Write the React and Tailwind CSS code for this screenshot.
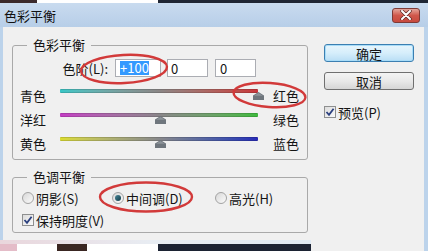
import React from "react";

function Check() {
  return (
    <div className="w-[12px] h-[12px] shrink-0 border border-[#8e8f8f] bg-gradient-to-br from-[#dcdcdc] to-[#fafafa] flex items-center justify-center">
      <svg width="10" height="10" viewBox="0 0 10 10">
        <path d="M1.5 5 L4 7.8 L8.6 1.8" fill="none" stroke="#2a3f7e" strokeWidth="1.8" />
      </svg>
    </div>
  );
}

function Radio({ on }) {
  return (
    <div className="w-[12px] h-[12px] shrink-0 rounded-full border border-[#a3a3a3] bg-gradient-to-br from-[#d8d8d8] to-[#fbfbfb] flex items-center justify-center">
      {on ? <div className="w-[6px] h-[6px] rounded-full bg-gradient-to-br from-[#4a8a9a] to-[#0f3a48]" /> : null}
    </div>
  );
}

function Thumb() {
  return (
    <svg width="11" height="8" viewBox="0 0 11 8">
      <path d="M5.5 0 L11 3.5 L11 8 L0 8 L0 3.5 Z" fill="#6f767d" />
      <path d="M5.5 1 L10 3.8 L1 3.8 Z" fill="#8d949a" />
    </svg>
  );
}

function SliderRow({ left, right, grad, thumbLeft }) {
  return (
    <div className="flex items-center h-[24px] pl-[7px]">
      <span className="w-[40px] leading-none">{left}</span>
      <div className="relative w-[198px] h-[14px]">
        <div className={"mt-[1px] h-[4px] rounded-[1px] border-y border-[#00000022] " + grad} />
        <div className={"absolute top-[4px] flex " + thumbLeft}>
          <Thumb />
        </div>
      </div>
      <span className="ml-[15px] leading-none">{right}</span>
    </div>
  );
}

export default function App() {
  return (
    <div className="relative w-[428px] h-[251px] overflow-hidden bg-[#bcd3eb] font-['Noto_Sans_CJK_SC',sans-serif] text-[13px] text-[#141414] flex flex-col">
      <div className="flex h-[3px] shrink-0">
        <div className="w-[37px] bg-[#3b2a2c]" />
        <div className="w-[121px] bg-white" />
        <div className="flex-1 bg-[#1f2634]" />
      </div>
      <div className="h-[24px] shrink-0 flex items-center justify-between pl-[4px] pr-[8px] bg-gradient-to-b from-[#c9dbef] to-[#b7cee8]">
        <span className="leading-none text-[13px] text-[#111]">色彩平衡</span>
        <div className="w-[28px] h-[15px] rounded-[3px] border border-[#7e3a36] bg-gradient-to-b from-[#e3a49b] via-[#d0574b] to-[#c84a3e] flex items-center justify-center">
          <svg width="12" height="10" viewBox="0 0 12 10">
            <path d="M2 1 L10 9 M10 1 L2 9" stroke="#5a2a26" strokeWidth="3.4" strokeLinecap="round" />
            <path d="M2 1 L10 9 M10 1 L2 9" stroke="#ffffff" strokeWidth="2" strokeLinecap="round" />
          </svg>
        </div>
      </div>
      <div className="flex-1 ml-[3px] mr-[4px] bg-[#f0f0f0] flex pl-[9px] pt-[9px]">
        <div className="w-[296px] flex flex-col">
          <fieldset className="border border-[#a9a9a9] rounded-[3px] pb-[4px]">
            <legend className="ml-[14px] px-[6px] leading-[18px] text-[13px]">色彩平衡</legend>
            <div className="mt-[5px] h-[18px] flex items-center">
              <span className="w-[95px] text-right leading-none">色阶(L):</span>
              <div className="ml-[7px] w-[46px] h-[18px] border border-[#abadb3] bg-white flex items-center pl-[4px]">
                <span className="bg-[#3399ff] text-white leading-[14px]">+100</span>
              </div>
              <div className="ml-[6px] w-[41px] h-[18px] border border-[#abadb3] bg-white flex items-center pl-[3px] leading-none">0</div>
              <div className="ml-[7px] w-[41px] h-[18px] border border-[#abadb3] bg-white flex items-center pl-[4px] leading-none">0</div>
            </div>
            <div className="mt-[6px] flex flex-col">
              <SliderRow left="青色" right="红色" grad="bg-gradient-to-r from-[#37c6c6] via-[#8a8686] to-[#c8343a]" thumbLeft="left-[193px]" />
              <SliderRow left="洋红" right="绿色" grad="bg-gradient-to-r from-[#c43cc4] via-[#8a868a] to-[#3cba3c]" thumbLeft="left-[95px]" />
              <SliderRow left="黄色" right="蓝色" grad="bg-gradient-to-r from-[#dcdc2c] via-[#88888a] to-[#2a2ab8]" thumbLeft="left-[95px]" />
            </div>
          </fieldset>
          <fieldset className="mt-[8px] border border-[#a9a9a9] rounded-[3px] pb-[4px]">
            <legend className="ml-[14px] px-[6px] leading-[18px] text-[13px]">色调平衡</legend>
            <div className="mt-[4px] h-[16px] flex items-center pl-[9px]">
              <div className="w-[90px] flex items-center">
                <Radio />
                <span className="ml-[2px] leading-none">阴影(S)</span>
              </div>
              <div className="w-[103px] flex items-center">
                <Radio on />
                <span className="ml-[2px] leading-none">中间调(D)</span>
              </div>
              <div className="flex items-center">
                <Radio />
                <span className="ml-[2px] leading-none">高光(H)</span>
              </div>
            </div>
            <div className="mt-[6px] h-[16px] flex items-center pl-[9px]">
              <Check />
              <span className="ml-[2px] leading-none">保持明度(V)</span>
            </div>
          </fieldset>
        </div>
        <div className="ml-[16px] w-[90px] pt-[8px] flex flex-col">
          <div className="h-[18px] rounded-[3px] border border-[#3c7fb1] bg-gradient-to-b from-[#e8f5fc] via-[#d6eefb] to-[#b9def5] shadow-[inset_0_0_0_1px_#a8dcf8] flex items-center justify-center leading-none">确定</div>
          <div className="mt-[10px] h-[18px] rounded-[3px] border border-[#707070] bg-gradient-to-b from-[#f4f4f4] via-[#e9e9e9] to-[#d6d6d6] flex items-center justify-center leading-none">取消</div>
          <div className="mt-[16px] h-[12px] flex items-center">
            <Check />
            <span className="ml-[2px] leading-none">预览(P)</span>
          </div>
        </div>
      </div>
      <div className="absolute left-0 bottom-0 w-[311px] h-[11px] flex flex-col">
        <div className="h-[4px] bg-gradient-to-r from-[#e9d6dc] via-[#e8edf3] to-[#dfe9f3]" />
        <div className="flex-1 flex">
          <div className="w-[17px] bg-[#e4bcc8]" />
          <div className="w-[40px] bg-white" />
          <div className="w-[30px] bg-[#3a2622]" />
          <div className="w-[71px] bg-white" />
          <div className="flex-1 bg-[#1c2333]" />
        </div>
      </div>
      <svg className="absolute left-0 top-0 pointer-events-none" width="428" height="251" viewBox="0 0 428 251">
        <ellipse cx="124" cy="69" rx="43" ry="14" fill="none" stroke="#d23a3a" strokeWidth="2.4" transform="rotate(-3 124 69)" />
        <ellipse cx="269.5" cy="95" rx="36" ry="12" fill="none" stroke="#d23a3a" strokeWidth="2.4" transform="rotate(4 269.5 95)" />
        <ellipse cx="146" cy="197" rx="46" ry="14.5" fill="none" stroke="#d23a3a" strokeWidth="2.4" />
      </svg>
    </div>
  );
}
